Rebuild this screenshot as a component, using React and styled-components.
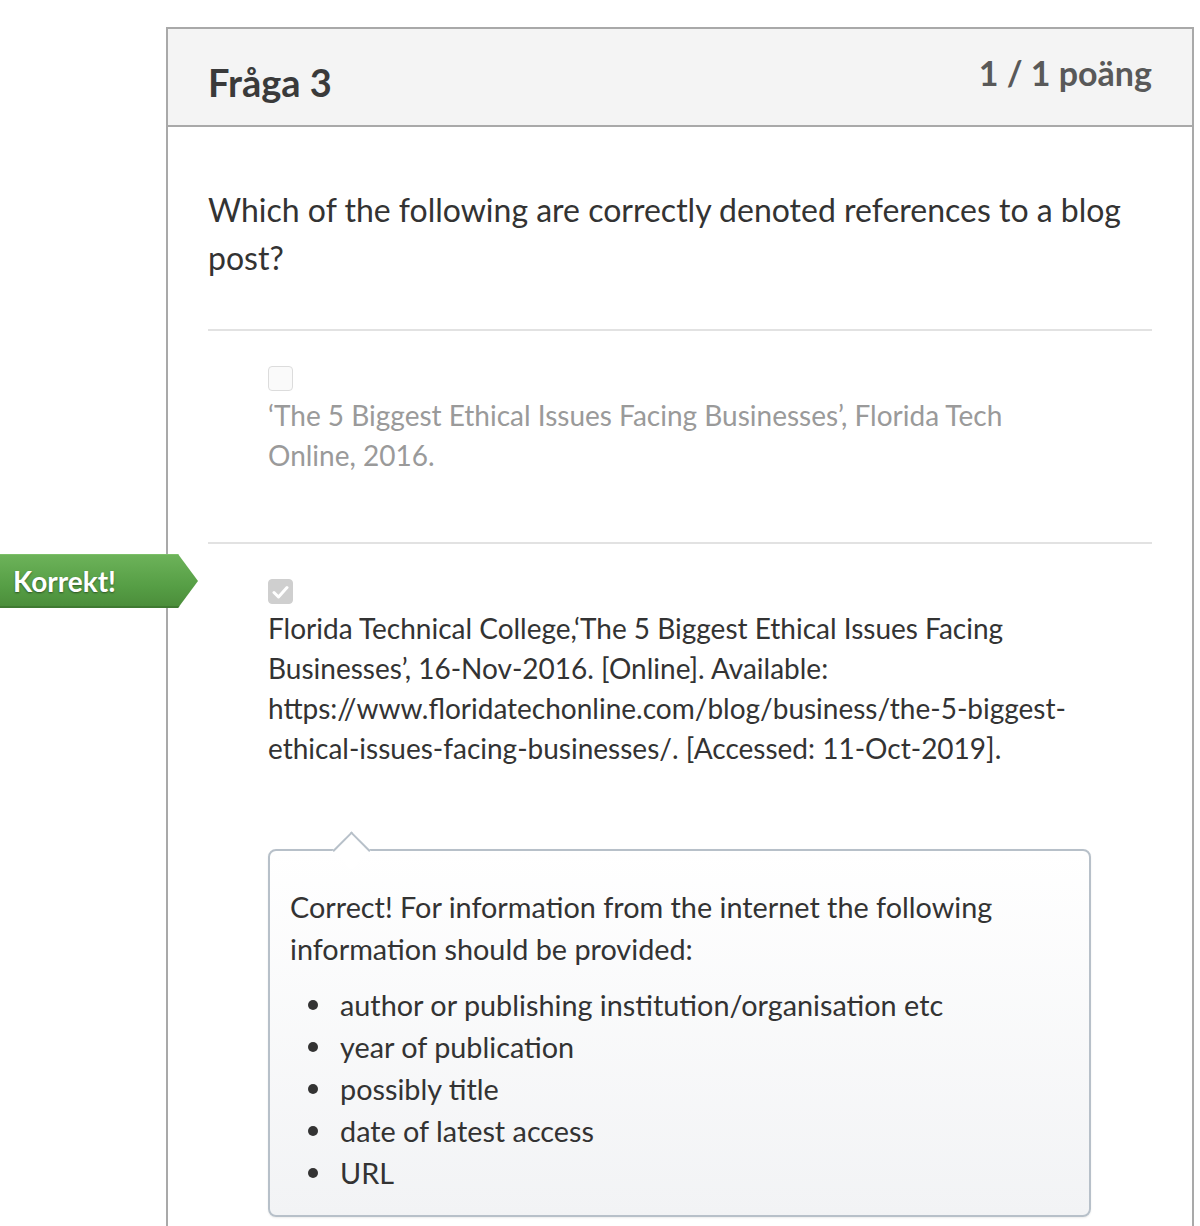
import styled, { createGlobalStyle } from "styled-components";

const answers = [
  {
    id: "a1",
    checked: false,
    text: "‘The 5 Biggest Ethical Issues Facing Businesses’, Florida Tech Online, 2016.",
  },
  {
    id: "a2",
    checked: true,
    correct: true,
    text: "Florida Technical College,‘The 5 Biggest Ethical Issues Facing Businesses’, 16-Nov-2016. [Online]. Available: https://www.floridatechonline.com/blog/business/the-5-biggest-ethical-issues-facing-businesses/. [Accessed: 11-Oct-2019].",
  },
];

const feedbackItems = [
  "author or publishing institution/organisation etc",
  "year of publication",
  "possibly title",
  "date of latest access",
  "URL",
];

const GlobalStyle = createGlobalStyle`
  html, body {
    margin: 0;
    padding: 0;
    background: #fff;
    font-family: Lato, "Open Sans", "Liberation Sans", sans-serif;
    color: #333;
  }
`;

export default function App() {
  return (
    <>
      <GlobalStyle />
      <Page>
        <Question>
          <Header>
            <QuestionName>Fråga 3</QuestionName>
            <Points>1 / 1 poäng</Points>
          </Header>
          <Body>
            <QuestionText>
              Which of the following are correctly denoted references to a blog
              post?
            </QuestionText>
            {answers.map((a) => (
              <Answer key={a.id}>
                {a.correct && <Tag>Korrekt!</Tag>}
                <Checkbox $checked={a.checked}>
                  {a.checked && (
                    <svg width="17" height="14" viewBox="0 0 17 14">
                      <path
                        d="M2 7.5 L6.5 12 L15 2.5"
                        fill="none"
                        stroke="#fff"
                        strokeWidth="3"
                        strokeLinecap="round"
                        strokeLinejoin="round"
                      />
                    </svg>
                  )}
                </Checkbox>
                <AnswerText $muted={!a.checked}>{a.text}</AnswerText>
              </Answer>
            ))}
            <Feedback>
              <FeedbackText>
                Correct! For information from the internet the following
                information should be provided:
              </FeedbackText>
              <FeedbackList>
                {feedbackItems.map((item) => (
                  <FeedbackItem key={item}>{item}</FeedbackItem>
                ))}
              </FeedbackList>
            </Feedback>
          </Body>
        </Question>
      </Page>
    </>
  );
}

const Page = styled.div`
  padding: 27px 6px 0 166px;
  height: 1199px;
  overflow: hidden;
`;

const Question = styled.section`
  border: 2px solid #a9a9a9;
  border-bottom: none;
  height: 100%;
`;

const Header = styled.header`
  display: flex;
  justify-content: space-between;
  align-items: flex-start;
  height: 98px;
  box-sizing: border-box;
  padding: 0 40px;
  background: #f4f4f4;
  border-bottom: 2px solid #a9a9a9;
`;

const QuestionName = styled.h2`
  margin: 27px 0 0;
  font-size: 38px;
  line-height: 52px;
  font-weight: 700;
  color: #3a3a3a;
`;

const Points = styled.div`
  margin-top: 24px;
  font-size: 34px;
  line-height: 40px;
  font-weight: 700;
  color: #595959;
`;

const Body = styled.div`
  padding: 0 40px;
`;

const QuestionText = styled.p`
  margin: 59px 0 0;
  padding-bottom: 47px;
  font-size: 32px;
  line-height: 48px;
  color: #333;
`;

const Answer = styled.div`
  position: relative;
  border-top: 2px solid #e2e2e2;
  padding: 35px 0 67px 60px;
`;

const Tag = styled.div`
  position: absolute;
  left: -208px;
  top: 10px;
  width: 198px;
  height: 54px;
  box-sizing: border-box;
  padding-left: 13px;
  display: flex;
  align-items: center;
  clip-path: polygon(0 0, 178px 0, 198px 50%, 178px 100%, 0 100%);
  background: linear-gradient(#6db35a, #569e45 60%, #4a8c3a);
  box-shadow: inset 0 -2px 0 #3f7a31, inset 0 1px 0 #7cc068;
  color: #fff;
  font-size: 28px;
  font-weight: 700;
  text-shadow: 0 1px 2px rgba(0, 0, 0, 0.45);
`;

const Checkbox = styled.div`
  width: 25px;
  height: 25px;
  box-sizing: border-box;
  border-radius: 4px;
  display: flex;
  align-items: center;
  justify-content: center;
  border: 1px solid ${(p) => (p.$checked ? "#cfcfcf" : "#dcdcdc")};
  background: ${(p) => (p.$checked ? "#cfcfcf" : "#fafafa")};
  margin-bottom: 4px;
`;

const AnswerText = styled.div`
  max-width: 820px;
  font-size: 28px;
  line-height: 40px;
  color: ${(p) => (p.$muted ? "#9a9a9a" : "#333")};
  word-break: break-word;
`;

const Feedback = styled.div`
  position: relative;
  margin: 14px 0 0 60px;
  width: 823px;
  box-sizing: border-box;
  border: 2px solid #b7c0c9;
  border-radius: 8px;
  padding: 35px 20px 21px;
  background: linear-gradient(#ffffff, #f2f3f5);
  box-shadow: 0 1px 2px rgba(0, 0, 0, 0.08);

  &::before {
    content: "";
    position: absolute;
    left: 68px;
    top: -14px;
    width: 25px;
    height: 25px;
    background: #fff;
    border-top: 2px solid #b7c0c9;
    border-left: 2px solid #b7c0c9;
    transform: rotate(45deg);
  }
`;

const FeedbackText = styled.p`
  position: relative;
  margin: 0;
  font-size: 28.8px;
  line-height: 42px;
  color: #333;
`;

const FeedbackList = styled.ul`
  margin: 14px 0 0;
  padding-left: 50px;
  list-style: none;
  font-size: 28.8px;
  line-height: 42px;
  color: #333;
`;

const FeedbackItem = styled.li`
  position: relative;

  &::before {
    content: "";
    position: absolute;
    left: -32px;
    top: 16px;
    width: 10px;
    height: 10px;
    border-radius: 50%;
    background: #333;
  }
`;
